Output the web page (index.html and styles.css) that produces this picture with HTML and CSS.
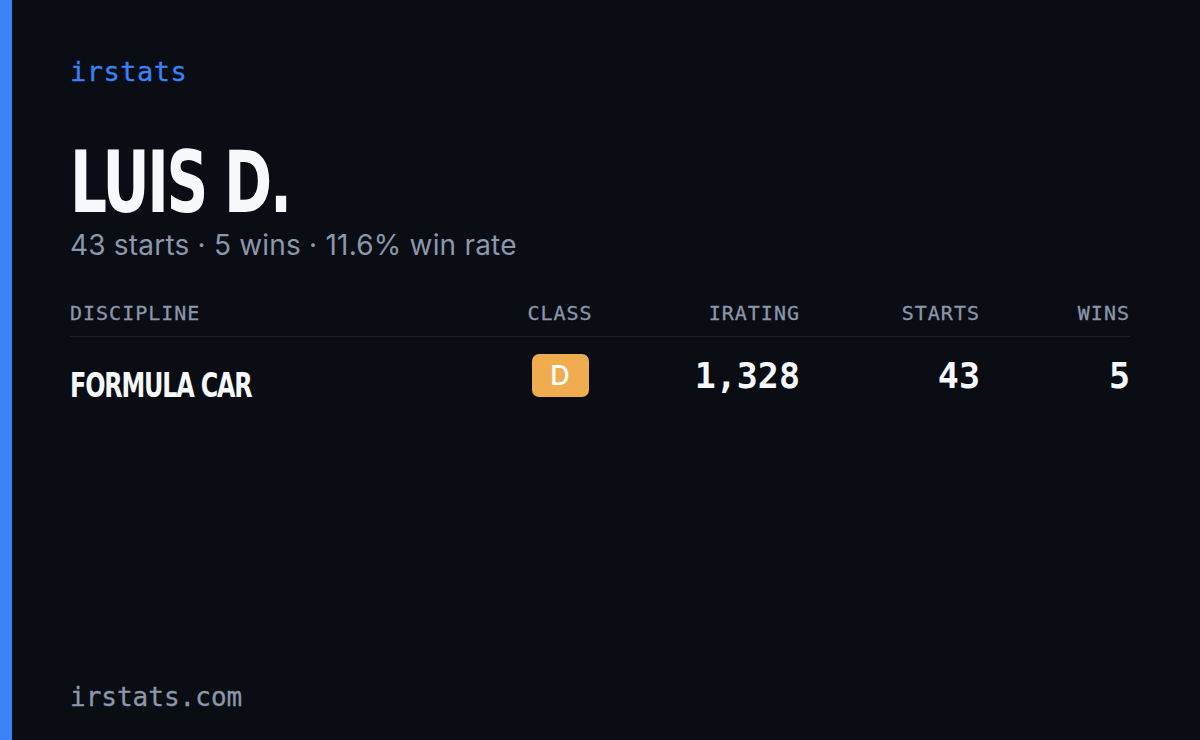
FILE: index.html
```html
<!DOCTYPE html>
<html lang="en">
<head>
<meta charset="utf-8">
<title>irstats — Luis D.</title>
<link rel="stylesheet" href="styles.css">
</head>
<body>
<div class="page">
  <div class="accent"></div>
  <main class="card">
    <div class="brand">irstats</div>
    <h1 class="name"><span class="squeeze">LUIS D.</span></h1>
    <p class="summary">43 starts · 5 wins · 11.6% win rate</p>
    <div class="table">
      <div class="row head">
        <div class="cell left">DISCIPLINE</div>
        <div class="cell center">CLASS</div>
        <div class="cell right">IRATING</div>
        <div class="cell right">STARTS</div>
        <div class="cell right">WINS</div>
      </div>
      <div class="row body">
        <div class="cell left discipline"><span class="squeeze">FORMULA CAR</span></div>
        <div class="cell center"><span class="badge">D</span></div>
        <div class="cell right num">1,328</div>
        <div class="cell right num">43</div>
        <div class="cell right num">5</div>
      </div>
    </div>
    <div class="footer">irstats.com</div>
  </main>
</div>
</body>
</html>
```

FILE: styles.css
```css
* { box-sizing: border-box; }
html, body { margin: 0; padding: 0; }
body {
  background: #0a0d14;
  color: #f5f6fa;
  font-family: "Inter", "Noto Sans", sans-serif;
}
.page {
  display: flex;
  width: 1200px;
  height: 740px;
}
.accent {
  width: 12px;
  flex: none;
  background: #3b82f6;
}
.card {
  flex: 1;
  display: flex;
  flex-direction: column;
  padding: 55px 70px 27px 58px;
}
.brand {
  font-family: "DejaVu Sans Mono", monospace;
  font-size: 27px;
  line-height: 34px;
  letter-spacing: 0.5px;
  color: #3b82f6;
  -webkit-text-stroke: 0.3px #3b82f6;
}
.squeeze {
  display: inline-block;
  transform-origin: left center;
}
.name {
  margin: 51px 0 0 0;
  font-family: "DejaVu Sans Condensed", "DejaVu Sans", sans-serif;
  font-weight: 700;
  font-size: 86px;
  line-height: 85px;
  letter-spacing: -3px;
  color: #f7f8fb;
}
.name .squeeze { transform: scaleX(0.75); }
.summary {
  margin: 3px 0 0 0;
  font-family: "Inter", "Noto Sans", sans-serif;
  font-size: 28px;
  line-height: 34px;
  letter-spacing: 0.2px;
  color: #8b97ab;
}
.table {
  margin-top: 39px;
}
.row {
  display: grid;
  grid-template-columns: 430px 120px 180px 180px 150px;
}
.head {
  padding-bottom: 11px;
  border-bottom: 1px solid #1a1f2b;
}
.head .cell {
  font-family: "DejaVu Sans Mono", monospace;
  font-size: 20px;
  line-height: 24px;
  letter-spacing: 1px;
  color: #8a96aa;
  -webkit-text-stroke: 0.3px #8a96aa;
}
.body {
  padding-top: 16px;
  align-items: start;
}
.left { text-align: left; }
.center { text-align: center; }
.right { text-align: right; }
.discipline {
  font-family: "DejaVu Sans Condensed", "DejaVu Sans", sans-serif;
  font-weight: 700;
  font-size: 34px;
  line-height: 43px;
  padding-top: 11px;
  letter-spacing: -1.5px;
  color: #f7f8fb;
}
.discipline .squeeze { transform: scaleX(0.78); }
.num {
  font-family: "DejaVu Sans Mono", monospace;
  font-weight: 700;
  font-size: 35px;
  line-height: 43px;
  padding-top: 2px;
  color: #f7f8fb;
}
.badge {
  display: inline-flex;
  align-items: center;
  justify-content: center;
  width: 57px;
  height: 43px;
  margin-top: 1px;
  border-radius: 7px;
  background: #efad4f;
  color: #ffffff;
  font-family: "Inter", "Noto Sans", sans-serif;
  font-weight: 500;
  font-size: 27px;
}
.footer {
  margin-top: auto;
  font-family: "DejaVu Sans Mono", monospace;
  font-size: 26px;
  line-height: 32px;
  color: #8b97ab;
  -webkit-text-stroke: 0.3px #8b97ab;
}
```
